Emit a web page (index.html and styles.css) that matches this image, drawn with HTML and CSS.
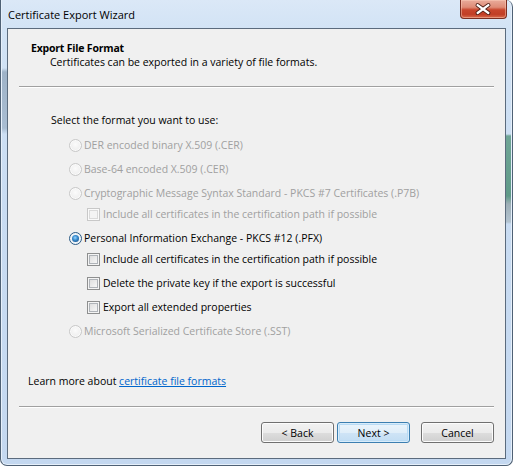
FILE: index.html
```html
<!DOCTYPE html>
<html lang="en">
<head>
<meta charset="utf-8">
<title>Certificate Export Wizard</title>
<link rel="stylesheet" href="styles.css">
</head>
<body>
<div class="window">
  <div class="titlebar">
    <span class="title">Certificate Export Wizard</span>
    <button class="close" type="button" aria-label="Close">
      <svg width="47" height="19" viewBox="0 0 47 19">
        <path d="M18 5 L29 13 M29 5 L18 13" stroke="#4a1c14" stroke-width="4.2" stroke-linecap="round" fill="none"/>
        <path d="M18 5 L29 13 M29 5 L18 13" stroke="#ffffff" stroke-width="2.4" stroke-linecap="round" fill="none"/>
      </svg>
    </button>
  </div>

  <div class="client">
    <div class="header">
      <div class="h-title">Export File Format</div>
      <div class="h-sub">Certificates can be exported in a variety of file formats.</div>
    </div>
    <div class="sep"></div>

    <div class="body">
      <p class="prompt">Select the format you want to use:</p>
      <div class="options">
        <div class="row disabled"><span class="rb"></span><span>DER encoded binary X.509 (.CER)</span></div>
        <div class="row disabled"><span class="rb"></span><span>Base-64 encoded X.509 (.CER)</span></div>
        <div class="row disabled"><span class="rb"></span><span>Cryptographic Message Syntax Standard - PKCS #7 Certificates (.P7B)</span></div>
        <div class="row sub first disabled"><span class="cb"></span><span>Include all certificates in the certification path if possible</span></div>
        <div class="row"><span class="rb on"></span><span>Personal Information Exchange - PKCS #12 (.PFX)</span></div>
        <div class="row sub first"><span class="cb"></span><span>Include all certificates in the certification path if possible</span></div>
        <div class="row sub"><span class="cb"></span><span>Delete the private key if the export is successful</span></div>
        <div class="row sub"><span class="cb"></span><span>Export all extended properties</span></div>
        <div class="row disabled"><span class="rb"></span><span>Microsoft Serialized Certificate Store (.SST)</span></div>
      </div>
      <p class="learn">Learn more about <a href="#">certificate file formats</a></p>
    </div>

    <div class="sep"></div>
    <div class="footer">
      <button class="btn back" type="button">&lt; Back</button>
      <button class="btn default" type="button">Next &gt;</button>
      <button class="btn" type="button">Cancel</button>
    </div>
  </div>
</div>
</body>
</html>
```

FILE: styles.css
```css
* { box-sizing: border-box; }

html, body {
  margin: 0;
  padding: 0;
  background: #ffffff;
}

body {
  font-family: "Open Sans", "Noto Sans", sans-serif;
  font-size: 10.5px;
  color: #000;
}

/* Aero glass frame */
.window {
  width: 513px;
  height: 466px;
  border: 1px solid #4f6175;
  border-top: none;
  border-radius: 0 7px 7px 7px;
  background:
    linear-gradient(to bottom, transparent 134px, #6fa596 136px, #5f9a88 196px, #9daeb6 204px, #b3c3d0 222px, transparent 224px) right top / 6px 100% no-repeat,
    linear-gradient(to bottom, transparent 68px, #9fb3c8 72px, #a9bdd2 128px, transparent 134px) left top / 6px 100% no-repeat,
    linear-gradient(to bottom, #dbe8f7 0, #d2e3f5 28px, #c9dcf2 200px, #c4d8f0 100%);
  box-shadow: inset 1px 0 0 #e6f0fb, inset -1px 0 0 #e6f0fb, inset 0 -1px 0 #e6f0fb;
  display: flex;
  flex-direction: column;
}

.titlebar {
  height: 28px;
  display: flex;
  justify-content: space-between;
  align-items: flex-start;
}

.title {
  padding: 7px 0 0 7px;
  font-size: 11px;
  line-height: 16px;
  color: #000;
}

.close {
  width: 47px;
  height: 19px;
  margin: 0 5px 0 0;
  padding: 0;
  border: 1px solid #7a2e22;
  border-top: none;
  border-radius: 0 0 4px 4px;
  background: linear-gradient(to bottom, #e9ab9b 0%, #df8c77 40%, #c8452c 55%, #c13e26 80%, #d86a4d 100%);
  box-shadow: inset 0 0 0 1px rgba(255, 210, 190, 0.45);
  display: flex;
  align-items: center;
  justify-content: center;
}

.close svg { display: block; margin-left: -1px; }

/* Dialog client area */
.client {
  width: 499px;
  height: 431px;
  margin: 0 6px 6px;
  border: 1px solid #5b6b7d;
  background: #f0f0f0;
  display: flex;
  flex-direction: column;
}

.header {
  padding: 12px 0 0 23px;
  line-height: 14px;
}

.h-title {
  font-weight: 700;
  letter-spacing: -0.2px;
}

.h-sub { padding-left: 19px; }

.sep {
  height: 2px;
  margin: 17px 11px 0;
  border-top: 1px solid #a0a0a0;
  border-bottom: 1px solid #ffffff;
}

.body {
  padding-top: 24px;
}

.prompt {
  margin: 0;
  padding-left: 43px;
  line-height: 16px;
}

.options {
  margin: 6px 0 0 61px;
  display: flex;
  flex-direction: column;
  gap: 2px;
}

.row {
  height: 22px;
  display: flex;
  align-items: center;
  gap: 2px;
  white-space: nowrap;
}

.row.sub {
  padding-left: 18px;
  gap: 3px;
}

.row.sub.first { margin-top: -3px; }

.row.disabled { color: #a0a0a0; }

/* Radio button */
.rb {
  width: 13px;
  height: 13px;
  flex: none;
  border-radius: 50%;
  border: 1px solid #8e8f8f;
  background: radial-gradient(circle at 50% 40%, #f6f6f6 0, #e2e2e2 60%, #d3d3d3 100%);
  box-shadow: inset 0 0 0 1px #f4f4f4;
  position: relative;
}

.disabled .rb {
  border-color: #c8c8c8;
  background: radial-gradient(circle at 50% 40%, #fbfbfb 0, #f0f0f0 60%, #e6e6e6 100%);
  box-shadow: inset 0 0 0 1px #fafafa;
}

.rb.on {
  border-color: #2c5c87;
  background: radial-gradient(circle, #ffffff 0, #eaf3fb 60%, #c9dcec 100%);
}

.rb.on::after {
  content: "";
  position: absolute;
  left: 2px;
  top: 2px;
  width: 7px;
  height: 7px;
  border-radius: 50%;
  background: radial-gradient(circle at 45% 40%, #9ad6ff 0, #3b8ed0 40%, #0d3e73 100%);
}

/* Checkbox */
.cb {
  width: 13px;
  height: 13px;
  flex: none;
  border: 1px solid #8e8f8f;
  background: linear-gradient(135deg, #d8d8d8 0, #f2f2f2 70%, #fbfbfb 100%);
  box-shadow: inset 0 0 0 1px #f4f4f4, inset 0 0 0 2px #afb3b8;
}

.disabled .cb {
  border-color: #c8c8c8;
  background: #f4f4f4;
  box-shadow: inset 0 0 0 1px #fafafa, inset 0 0 0 2px #dadada;
}

.learn {
  margin: 31px 0 0;
  padding-left: 20px;
  line-height: 16px;
}

.learn a {
  color: #0066cc;
  text-decoration: underline;
}

.footer {
  padding: 14px 11px 0 0;
  display: flex;
  justify-content: flex-end;
  gap: 11px;
}

.btn {
  width: 73px;
  height: 21px;
  padding: 0;
  font: inherit;
  color: #000;
  border: 1px solid #707070;
  border-radius: 3px;
  background: linear-gradient(to bottom, #f2f2f2 0, #ebebeb 50%, #dddddd 51%, #cfcfcf 100%);
  box-shadow: inset 0 0 0 1px #fcfcfc;
}

.btn.back { margin-right: -8px; }

.btn.default {
  border-color: #3c7fb1;
  background: linear-gradient(to bottom, #ecf5fc 0, #e0eef9 50%, #cfe4f6 51%, #c2ddf3 100%);
  box-shadow: inset 0 0 0 1px #d9ecfa, inset 0 0 0 2px #b8dbf5;
}
```
